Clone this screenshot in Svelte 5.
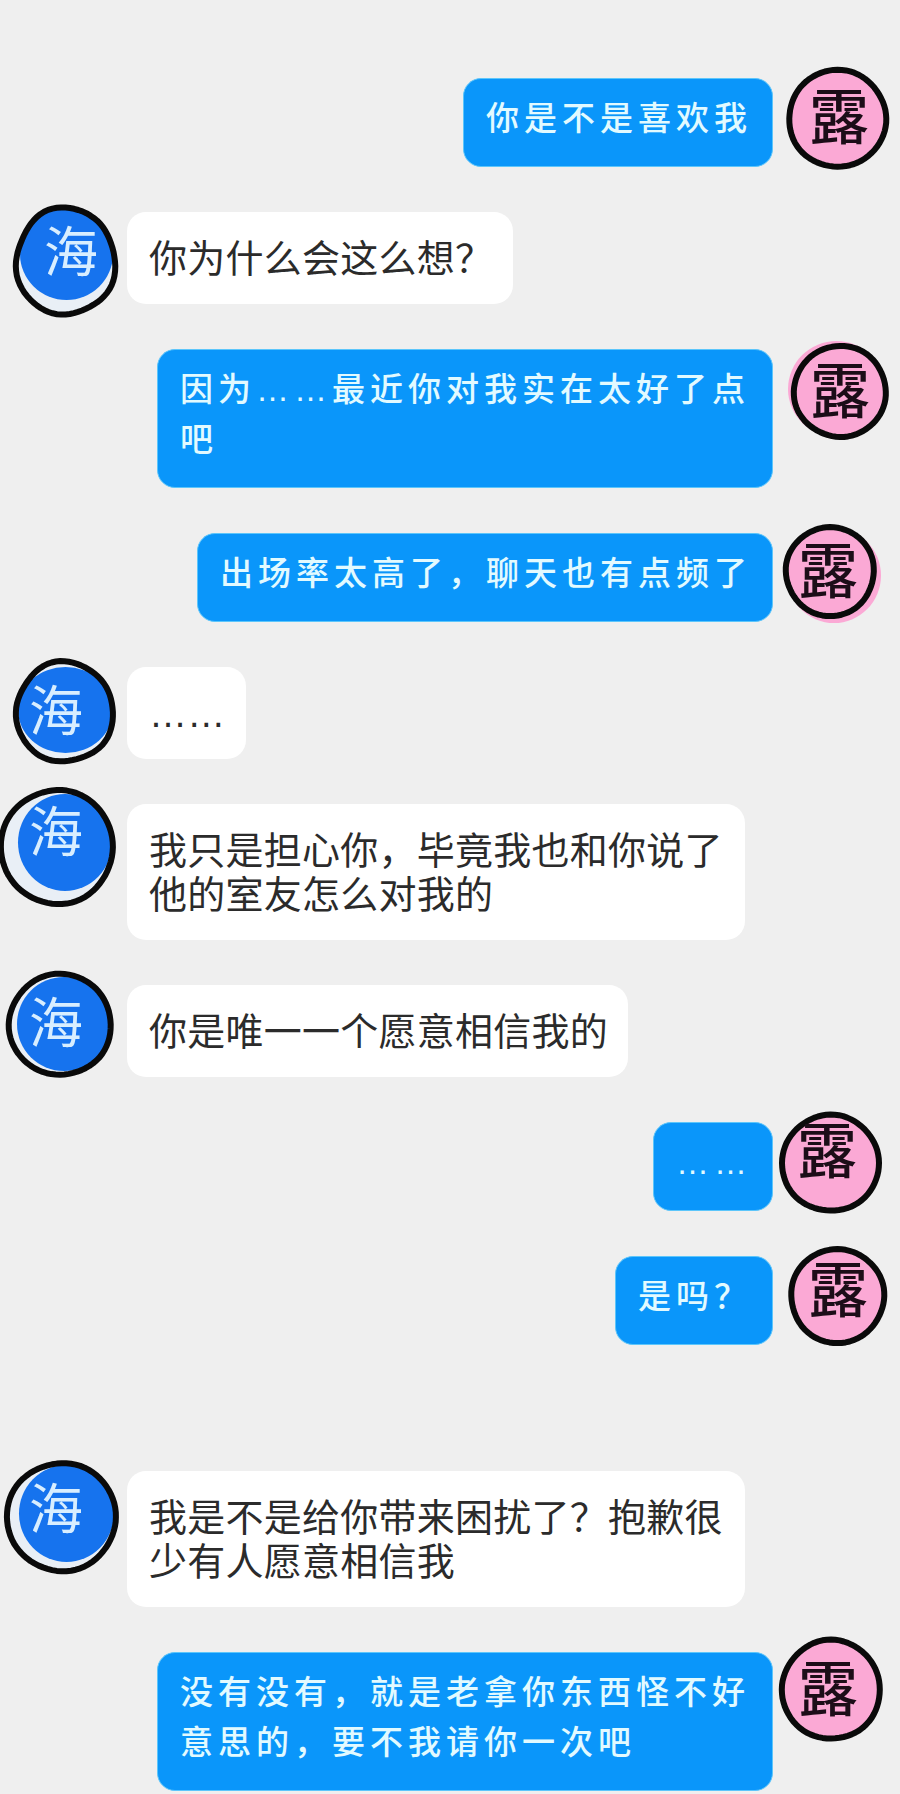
<script>
  // box values are relative to the row: x from the avatar slot's left, y from the bubble's top
  const messages = [
    { me: true, text: '你是不是喜欢我', ring: [13, 116, -11, 92], disk: [16, 113, -8, 89], glyph: [66, 40], wob: 1 },
    { text: '你为什么会这么想？', ring: [13, 118, -7, 106], disk: [20, 113, -4, 88], glyph: [71, 41], wob: 3 },
    { me: true, text: '因为……最近你对我实在太好了点吧', ring: [18, 116, -6, 91], disk: [15, 112, -8, 88], glyph: [67, 43], wob: 1 },
    { me: true, text: '出场率太高了，聊天也有点频了', ring: [10, 104, -9, 86], disk: [14, 108, -5, 90], glyph: [55, 39], wob: 1 },
    { text: '……', ring: [13, 116, -8, 98], disk: [18, 113, 0, 86], glyph: [56, 45], wob: 2.5 },
    { text: '我只是担心你，毕竟我也和你说了他的室友怎么对我的', ring: [-2, 116, -17, 103], disk: [18, 112, -10, 87], glyph: [56, 29], wob: 1 },
    { text: '你是唯一一个愿意相信我的', ring: [6, 114, -14, 93], disk: [17, 111, -8, 86], glyph: [56, 39], wob: 1 },
    { me: true, text: '……', ring: [6, 109, -10, 92], disk: [9, 106, -7, 89], glyph: [54, 30], wob: 1 },
    { me: true, text: '是吗？', ring: [15, 114, -10, 90], disk: [18, 111, -7, 87], glyph: [65, 35], wob: 1 },
    { text: '我是不是给你带来困扰了？抱歉很少有人愿意相信我', ring: [4, 119, -11, 103], disk: [19, 114, -6, 91], glyph: [56, 39], wob: 1, gapBefore: true },
    { me: true, text: '没有没有，就是老拿你东西怪不好意思的，要不我请你一次吧', ring: [6, 110, -15, 90], disk: [9, 107, -12, 87], glyph: [55, 38], wob: 1 }
  ]

  const ringWidth = 6

  // hand-drawn looking outline: an ellipse with a little radial wobble
  const ringPath = ([x0, x1, y0, y1], wob) => {
    const cx = (x0 + x1) / 2
    const cy = (y0 + y1) / 2
    const rx = (x1 - x0 - ringWidth) / 2
    const ry = (y1 - y0 - ringWidth) / 2
    let d = ''
    for (let i = 0; i < 72; i++) {
      const a = (i / 72) * Math.PI * 2
      const k = 1 + (wob * (Math.sin(a * 3 + x0) + 0.6 * Math.sin(a * 5 + y0))) / 150
      d += `${i ? 'L' : 'M'}${(cx + Math.cos(a) * rx * k).toFixed(1)} ${(cy + Math.sin(a) * ry * k).toFixed(1)}`
    }
    return d + 'Z'
  }

  const mid = (a, b) => (a + b) / 2
</script>

<main class="chat">
  {#each messages as m}
    <div class="row" class:me={m.me} class:break={m.gapBefore}>
      <div class="slot">
        <svg class="avatar" width="127" height="92" overflow="visible">
          <path d={ringPath(m.ring, 0)} class={m.me ? 'back-me' : 'back'} />
          <ellipse
            class={m.me ? 'disk-me' : 'disk'}
            cx={mid(m.disk[0], m.disk[1])}
            cy={mid(m.disk[2], m.disk[3])}
            rx={(m.disk[1] - m.disk[0]) / 2}
            ry={(m.disk[3] - m.disk[2]) / 2}
          />
          <path d={ringPath(m.ring, m.wob)} class="ring" stroke-width={ringWidth} />
          <text
            x={m.glyph[0]}
            y={m.glyph[1]}
            class={m.me ? 'name-me' : 'name'}
            text-anchor="middle"
            dominant-baseline="central"
          >{m.me ? '露' : '海'}</text>
        </svg>
      </div>
      <div class="bubble">{m.text}</div>
    </div>
  {/each}
</main>

<style>
  :global(body) {
    background: #efefef;
  }
  .chat {
    display: flex;
    flex-direction: column;
    gap: 45px;
    height: 1794px;
    box-sizing: border-box;
    padding-top: 78px;
    overflow: hidden;
    font-family: "Liberation Sans", "Noto Sans CJK SC", sans-serif;
  }
  .row {
    display: flex;
    align-items: flex-start;
  }
  .row.me {
    flex-direction: row-reverse;
  }
  .row.break {
    margin-top: 81px;
  }
  .slot {
    flex: 0 0 127px;
    height: 0;
  }
  .avatar {
    display: block;
    overflow: visible;
  }
  .back {
    fill: #e9eff6;
  }
  .back-me {
    fill: #fba9d5;
  }
  .disk {
    fill: #1673ee;
  }
  .disk-me {
    fill: #fba9d5;
  }
  .ring {
    fill: none;
    stroke: #0a0a0a;
    stroke-linejoin: round;
  }
  .name {
    font-size: 54px;
    fill: #d8eeff;
  }
  .name-me {
    font-size: 60px;
    font-weight: 500;
    fill: #1c0d18;
  }
  .bubble {
    box-sizing: border-box;
    max-width: 618px;
    padding: 25px 20px 23px 22px;
    border-radius: 19px;
    background: #fff;
    color: #2b2b2b;
    font-size: 38px;
    letter-spacing: 0.25px;
    line-height: 44px;
  }
  .me .bubble {
    max-width: 616px;
    padding: 15px 20px 22px 22px;
    border: 1px solid #5cc6fb;
    border-radius: 18px;
    background: #0a96fa;
    color: #e2faff;
    font-size: 33px;
    font-weight: 500;
    letter-spacing: 5px;
    line-height: 50px;
  }
</style>
